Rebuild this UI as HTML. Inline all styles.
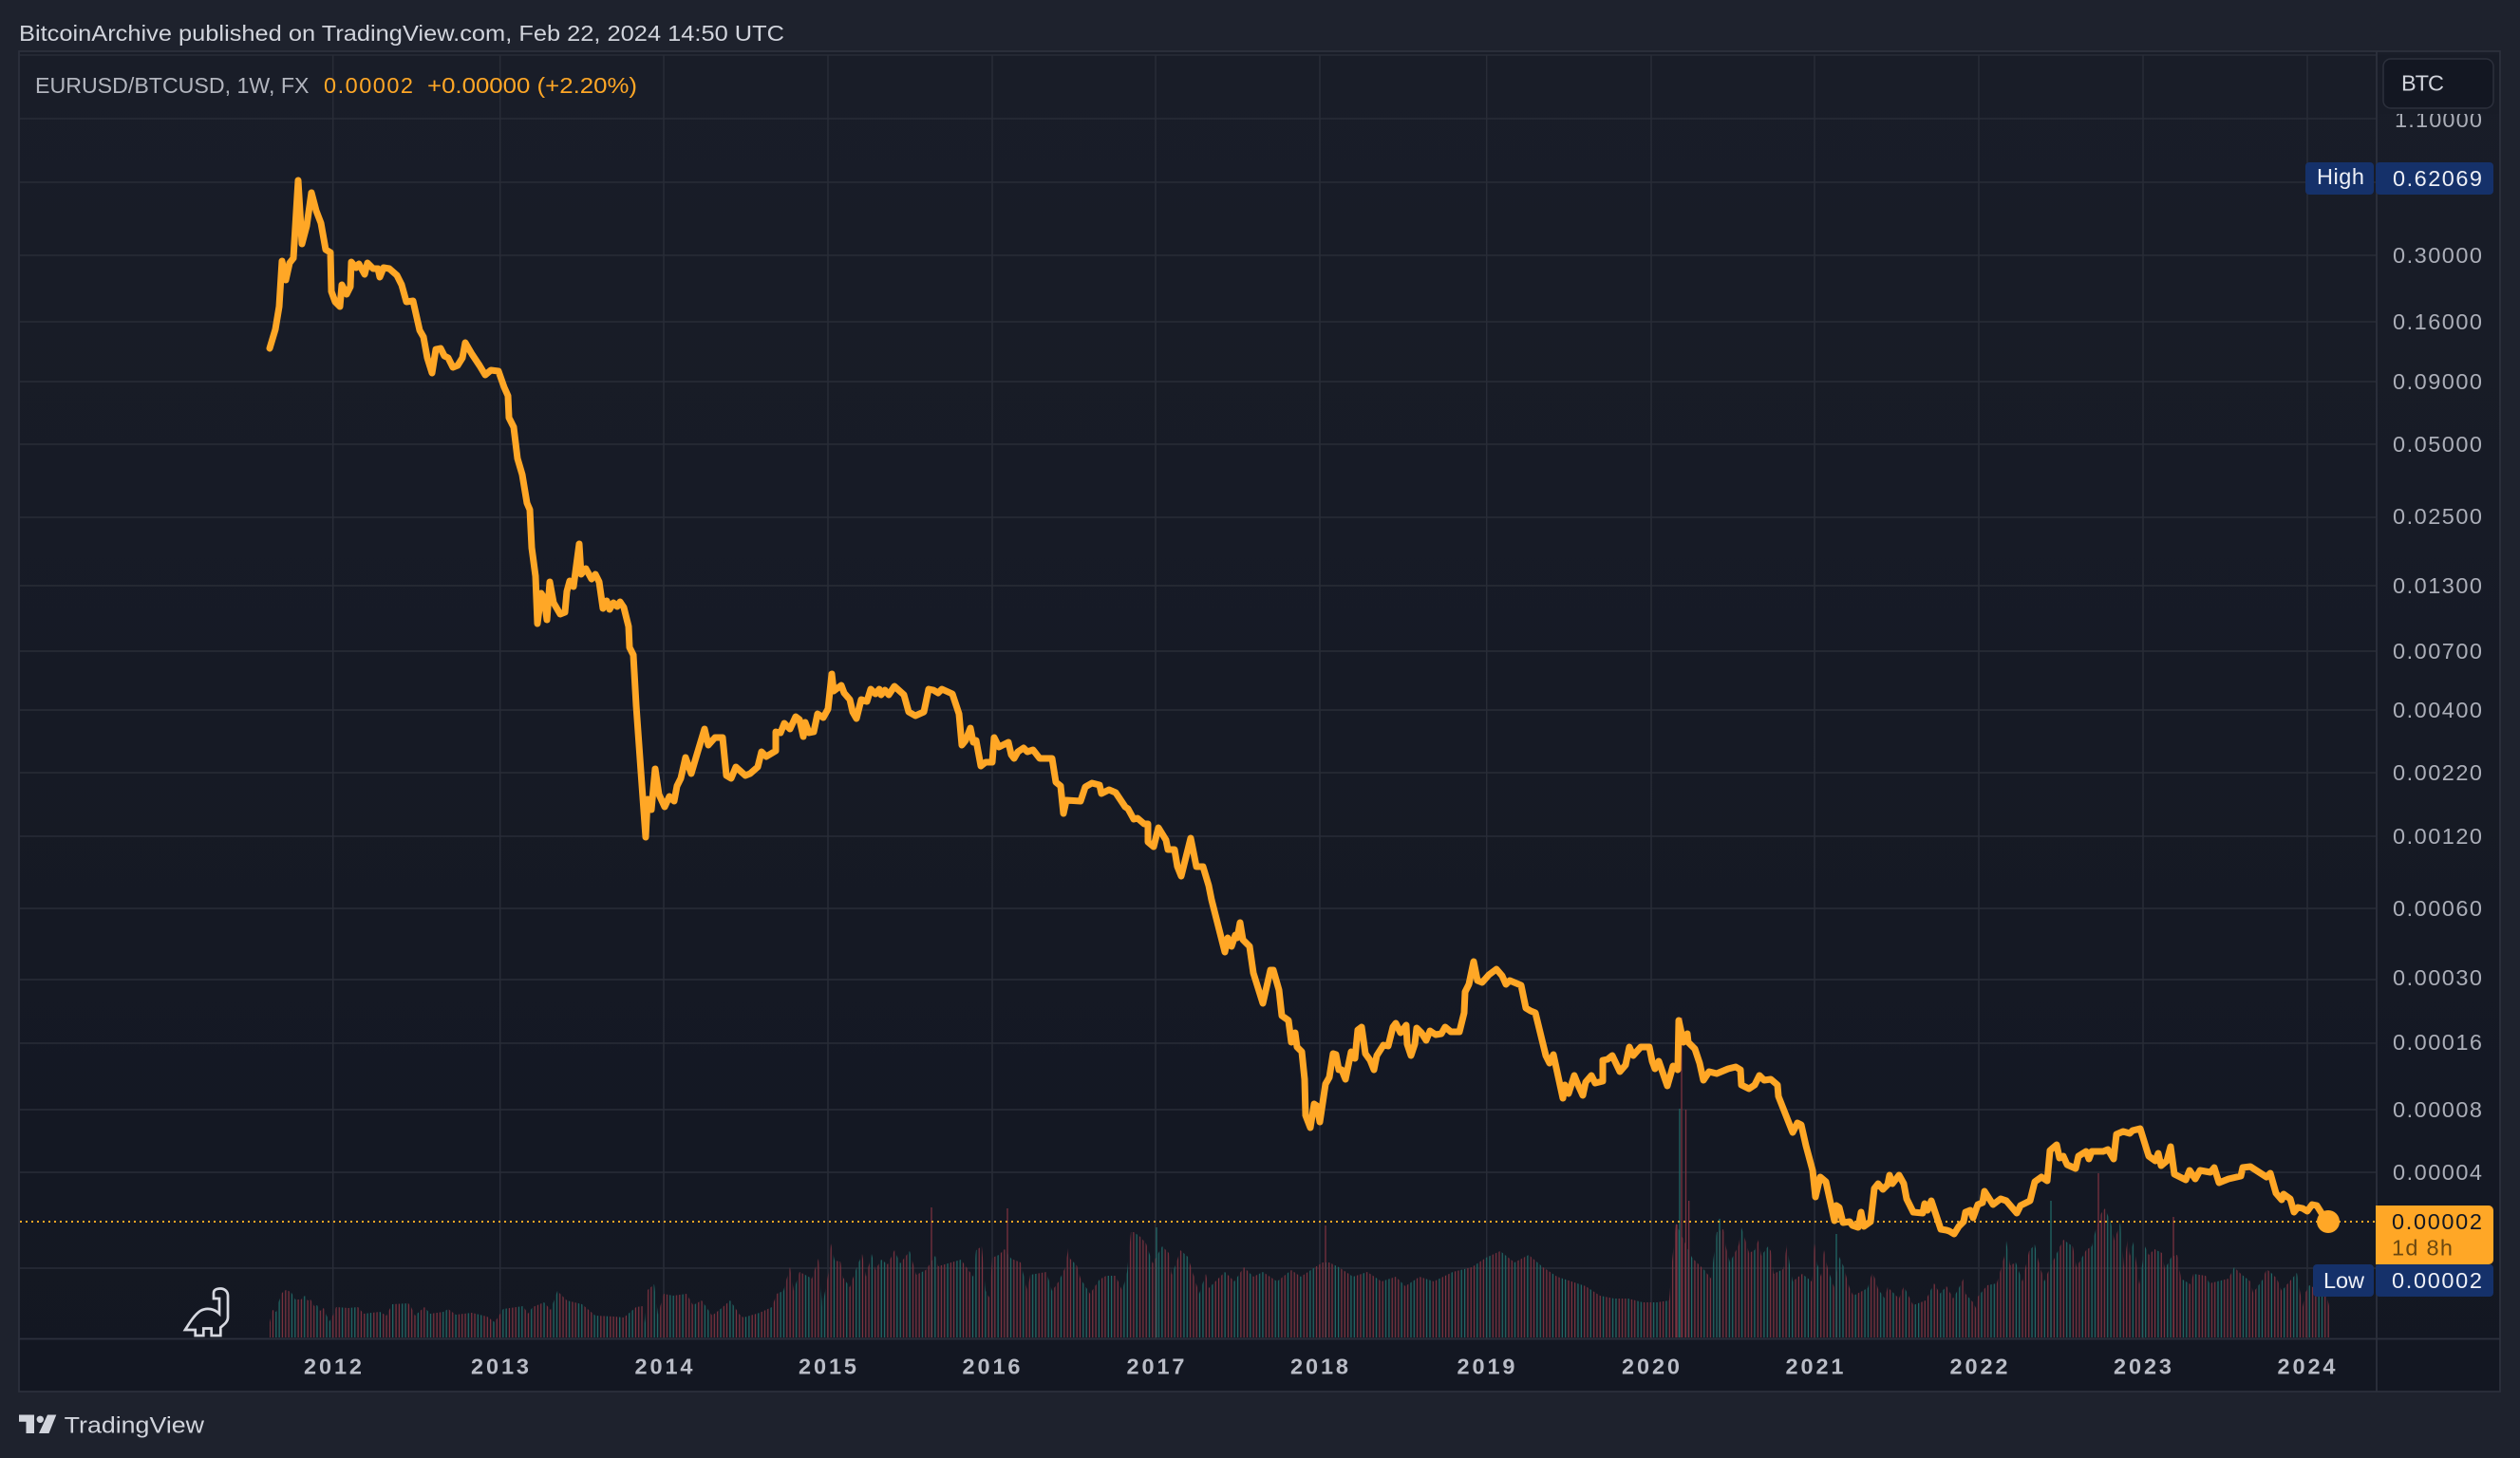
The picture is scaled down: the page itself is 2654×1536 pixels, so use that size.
<!DOCTYPE html>
<html><head><meta charset="utf-8"><title>EURUSD/BTCUSD</title>
<style>
html,body{margin:0;padding:0;background:#1e222d;width:2654px;height:1536px;overflow:hidden}
svg{display:block}
text{font-family:"Liberation Sans",sans-serif;font-size:23.5px}
</style></head><body>
<svg width="2654" height="1536" viewBox="0 0 2654 1536" xmlns="http://www.w3.org/2000/svg">
<defs>
<linearGradient id="bg" x1="0" y1="0" x2="0" y2="1"><stop offset="0" stop-color="#191d28"/><stop offset="1" stop-color="#131722"/></linearGradient>
<pattern id="bars" patternUnits="userSpaceOnUse" x="283.5" y="0" width="79.68" height="1536">
<path stroke="#7d3340" stroke-width="1.25" fill="none" d="M.75 0V1536M3.97 0V1536M13.9 0V1536M17.3 0V1536M20.6 0V1536M30.6 0V1536M33.9 0V1536M40.6 0V1536M43.9 0V1536M47.2 0V1536M53.9 0V1536M57.2 0V1536M67.2 0V1536M70.5 0V1536M73.8 0V1536"/>
<path stroke="#226a67" stroke-width="1.25" fill="none" d="M7.3 0V1536M10.6 0V1536M23.9 0V1536M27.3 0V1536M37.2 0V1536M50.5 0V1536M60.5 0V1536M63.9 0V1536M77.1 0V1536"/>
</pattern>
<clipPath id="vol"><polygon points="284,1410 284,1393 287,1380 291,1382 294,1370 297,1362 301,1359 304,1360 307,1362 311,1369 317,1369 321,1365 324,1370 327,1369 331,1376 334,1375 337,1381 341,1378 344,1386 347,1392 351,1385 354,1377 367,1378 377,1377 383,1384 400,1382 407,1386 413,1374 430,1373 433,1377 437,1386 447,1377 453,1384 467,1382 472,1379 480,1385 497,1383 513,1387 521,1393 530,1379 551,1376 556,1384 561,1377 573,1372 580,1380 587,1360 597,1370 613,1374 627,1386 647,1387 657,1388 670,1377 677,1376 679,1394 682,1359 689,1353 693,1385 699,1363 709,1365 723,1363 730,1375 739,1370 750,1386 760,1378 769,1370 779,1385 783,1388 800,1383 813,1377 818,1363 825,1360 832,1335 836,1360 842,1340 848,1343 855,1347 862,1326 866,1377 873,1338 875,1310 879,1328 885,1329 888,1346 895,1356 902,1336 908,1321 912,1345 918,1321 922,1338 928,1327 935,1332 942,1317 948,1331 958,1318 965,1343 975,1338 985,1323 988,1334 1012,1327 1025,1345 1028,1317 1034,1313 1038,1360 1042,1367 1045,1325 1052,1322 1058,1316 1065,1326 1075,1330 1082,1360 1085,1343 1102,1340 1108,1360 1115,1350 1122,1335 1125,1315 1127,1326 1134,1333 1138,1347 1148,1363 1158,1348 1165,1344 1175,1344 1182,1360 1187,1340 1191,1298 1194,1298 1201,1303 1207,1310 1214,1331 1224,1313 1231,1320 1234,1343 1240,1327 1243,1317 1251,1324 1257,1343 1263,1363 1270,1342 1273,1357 1280,1350 1290,1340 1300,1350 1310,1335 1320,1345 1330,1340 1345,1350 1360,1338 1370,1345 1385,1335 1393,1330 1400,1330 1410,1335 1425,1345 1440,1340 1455,1350 1470,1345 1480,1355 1495,1345 1510,1350 1530,1340 1550,1335 1565,1325 1580,1318 1595,1330 1610,1322 1625,1335 1640,1345 1655,1350 1670,1355 1685,1365 1700,1368 1715,1368 1730,1372 1745,1372 1758,1370 1761,1329 1765,1289 1782,1325 1795,1338 1802,1347 1808,1298 1815,1295 1818,1315 1822,1330 1831,1312 1834,1293 1838,1306 1842,1320 1848,1317 1852,1306 1855,1323 1862,1313 1865,1318 1868,1342 1878,1337 1882,1311 1885,1333 1888,1350 1898,1342 1908,1350 1911,1310 1914,1332 1918,1345 1921,1317 1925,1337 1932,1357 1937,1324 1942,1335 1945,1347 1948,1357 1952,1365 1967,1357 1972,1340 1975,1348 1978,1358 1985,1368 1988,1356 2000,1368 2005,1355 2015,1375 2028,1370 2037,1352 2043,1363 2050,1355 2057,1368 2063,1357 2068,1347 2070,1363 2078,1372 2082,1380 2083,1366 2093,1354 2103,1352 2107,1338 2111,1323 2113,1307 2117,1333 2123,1330 2130,1350 2137,1318 2143,1311 2147,1329 2153,1350 2157,1340 2163,1327 2173,1306 2183,1313 2187,1335 2197,1317 2203,1313 2207,1296 2213,1278 2217,1273 2223,1288 2227,1307 2233,1288 2237,1335 2241,1303 2243,1323 2247,1308 2253,1353 2259,1313 2263,1322 2269,1316 2277,1320 2280,1337 2287,1324 2293,1322 2297,1347 2307,1353 2310,1342 2323,1344 2327,1352 2347,1347 2353,1335 2360,1342 2370,1350 2373,1362 2383,1348 2387,1337 2392,1341 2398,1347 2403,1360 2413,1348 2419,1341 2425,1377 2428,1362 2432,1354 2450,1363 2453,1376 2453,1410"/></clipPath>
</defs>

<rect x="0" y="0" width="2654" height="1536" fill="#1e222d"/>
<rect x="20" y="54" width="2613" height="1412" fill="url(#bg)"/>

<!-- grid -->
<path stroke="#282c37" stroke-width="1.5" fill="none" d="M21 58H2503M21 125H2503M21 192H2503M21 269H2503M21 339H2503M21 402H2503M21 468H2503M21 545H2503M21 617H2503M21 686H2503M21 748H2503M21 814H2503M21 881H2503M21 957H2503M21 1032H2503M21 1099H2503M21 1169H2503M21 1235H2503M21 1336H2503"/>
<path stroke="#282c37" stroke-width="1.5" fill="none" d="M350.7 58V1410M526.7 58V1410M699 58V1410M872 58V1410M1045 58V1410M1217 58V1410M1390 58V1410M1565.7 58V1410M1739 58V1410M1911 58V1410M2084 58V1410M2257 58V1410M2430 58V1410"/>

<!-- volume -->
<rect x="283" y="1200" width="2171" height="209" fill="url(#bars)" clip-path="url(#vol)"/>
<path stroke="#7d3340" stroke-width="1.25" fill="none" d="M981 1272V1409M1061 1273V1409M1396 1291V1409M1771 1072V1409M1775.5 1169V1409M1778.7 1265V1409M1766 1290V1409M2210 1236V1409M2289 1282V1409"/>
<path stroke="#226a67" stroke-width="1.25" fill="none" d="M1218 1293V1409M1769 1168V1409M1811 1284V1409M1934 1300V1409M2160 1265V1409"/>

<!-- last price dotted line -->
<line x1="21" y1="1287" x2="2502" y2="1287" stroke="#ffa726" stroke-width="2" stroke-dasharray="2 4"/>

<!-- main line -->
<polyline fill="none" stroke="#ffa726" stroke-width="7" stroke-linejoin="round" stroke-linecap="round" points="284,367 290,347 294,323 297,275 301,295 305,277 309,272 314,190 318,257 323,238 328,203 333,222 338,235 343,263 348,266 349,307 353,318 358,323 360,300 365,310 369,302 370,276 375,282 378,278 384,289 387,277 393,283 398,283 400,292 404,282 410,283 418,290 423,300 428,318 435,317 442,348 446,355 450,377 455,393 459,368 464,367 468,375 472,377 477,387 482,385 487,377 490,361 497,373 505,385 511,395 517,390 525,391 531,408 535,417 536,440 541,450 545,483 550,500 555,530 558,537 560,577 564,607 566,657 570,625 573,630 576,653 579,613 583,635 590,647 595,645 597,623 600,612 604,618 610,573 612,605 617,599 623,610 627,605 631,613 635,641 639,633 642,642 646,635 650,639 653,634 657,640 662,660 663,682 667,690 670,743 675,813 680,882 682,842 686,853 690,810 694,837 700,850 705,839 710,844 713,828 717,820 722,798 728,815 733,798 742,768 746,785 753,777 761,777 765,817 770,820 775,808 785,817 790,815 798,808 802,792 807,797 817,791 817,771 822,772 826,762 832,768 838,755 842,758 846,776 848,761 852,772 857,771 861,752 867,756 872,747 876,710 878,728 886,722 889,730 895,737 898,750 902,757 907,737 913,739 917,726 922,731 926,726 928,732 932,727 936,732 942,723 952,732 957,750 964,754 973,750 978,726 983,727 988,730 992,726 1003,731 1010,752 1013,785 1017,780 1022,767 1025,782 1028,780 1033,807 1038,803 1045,803 1047,777 1052,787 1062,782 1065,795 1068,799 1072,792 1078,788 1082,792 1088,790 1095,799 1108,799 1112,824 1117,828 1120,857 1123,843 1138,844 1143,829 1150,825 1158,827 1160,836 1168,832 1175,835 1185,850 1188,852 1194,863 1198,862 1205,868 1209,868 1209,887 1215,892 1220,872 1228,885 1230,895 1237,895 1240,913 1244,923 1254,883 1260,913 1267,913 1273,933 1276,948 1290,1003 1293,988 1297,997 1301,985 1303,988 1306,972 1309,990 1316,997 1320,1025 1330,1057 1338,1022 1341,1022 1347,1043 1350,1070 1357,1075 1360,1098 1364,1088 1366,1103 1371,1108 1374,1137 1375,1175 1380,1188 1384,1163 1387,1165 1390,1182 1396,1142 1400,1135 1404,1110 1407,1111 1410,1127 1413,1127 1417,1137 1423,1108 1427,1115 1430,1085 1434,1082 1438,1110 1443,1117 1447,1127 1450,1112 1457,1101 1462,1102 1467,1082 1470,1078 1475,1088 1481,1080 1482,1100 1486,1112 1490,1100 1492,1083 1497,1088 1502,1096 1506,1086 1512,1090 1518,1089 1522,1082 1528,1087 1537,1087 1542,1067 1543,1045 1547,1037 1552,1013 1556,1033 1561,1035 1568,1027 1576,1021 1582,1028 1586,1037 1590,1033 1602,1038 1607,1062 1612,1065 1617,1067 1628,1112 1632,1120 1636,1111 1646,1157 1648,1143 1652,1152 1658,1133 1662,1143 1667,1154 1670,1140 1676,1133 1680,1141 1688,1139 1688,1117 1693,1116 1698,1112 1706,1129 1712,1122 1716,1103 1720,1112 1728,1103 1737,1103 1740,1118 1743,1126 1747,1118 1756,1144 1762,1123 1767,1127 1768,1075 1773,1098 1777,1089 1778,1098 1785,1105 1790,1120 1794,1138 1800,1129 1808,1131 1820,1126 1828,1124 1833,1127 1834,1143 1842,1147 1848,1143 1853,1133 1858,1138 1865,1137 1872,1143 1873,1155 1888,1193 1893,1183 1897,1185 1902,1207 1909,1233 1912,1261 1917,1240 1923,1245 1932,1286 1934,1270 1937,1272 1941,1288 1948,1287 1951,1291 1957,1293 1960,1277 1963,1292 1970,1287 1974,1252 1978,1247 1983,1253 1988,1248 1990,1238 1993,1247 2000,1238 2005,1247 2008,1263 2015,1277 2025,1278 2027,1268 2030,1275 2034,1265 2044,1295 2050,1296 2053,1297 2058,1300 2063,1292 2068,1287 2070,1277 2075,1275 2078,1283 2083,1269 2088,1267 2090,1255 2099,1269 2107,1263 2113,1265 2124,1278 2128,1270 2138,1265 2143,1245 2150,1240 2156,1244 2159,1212 2166,1206 2169,1220 2173,1218 2177,1227 2186,1231 2189,1218 2197,1213 2200,1221 2203,1213 2215,1213 2220,1211 2226,1221 2229,1195 2236,1192 2243,1194 2246,1191 2254,1189 2263,1218 2270,1223 2273,1215 2276,1228 2282,1223 2286,1208 2290,1237 2302,1243 2306,1233 2312,1242 2317,1233 2328,1235 2332,1230 2337,1246 2347,1242 2360,1239 2362,1230 2370,1229 2387,1240 2391,1236 2397,1257 2403,1264 2405,1258 2412,1263 2416,1277 2420,1272 2425,1273 2430,1276 2435,1269 2440,1270 2445,1278 2452,1287"/>
<circle cx="2452" cy="1287" r="12" fill="#ffa726"/>

<!-- dino -->
<path fill="none" stroke="#d6d8e0" stroke-width="2.7" stroke-linejoin="miter" d="M195 1401C200 1393 205 1385 211 1381C218 1377 226 1379 231 1384V1368H225V1362C225 1359 228 1357.5 232 1357.5C237 1357.5 240 1361 240 1365V1388C240 1393 235 1396 232.3 1398.5V1407H222.7V1399.5H214.3V1407H205.7V1401Z"/>

<!-- frame and axes -->
<path stroke="#2c303c" stroke-width="1.8" fill="none" d="M20 54H2633V1466H20ZM2503 54V1466M20 1410.5H2633"/>

<!-- price axis -->
<text x="2522" y="134" textLength="92" fill="#abaeb8">1.10000</text>
<rect x="2505" y="58" width="127" height="62" fill="#181c27"/>
<rect x="2510" y="62" width="116" height="52" rx="8" fill="#131722" stroke="#2c303c" stroke-width="1.5"/>
<text x="2529" y="95.7" textLength="45" fill="#d1d4dc">BTC</text>
<g fill="#abaeb8">
<text x="2520" y="277" textLength="94">0.30000</text>
<text x="2520" y="347" textLength="94">0.16000</text>
<text x="2520" y="410" textLength="94">0.09000</text>
<text x="2520" y="476" textLength="94">0.05000</text>
<text x="2520" y="552" textLength="94">0.02500</text>
<text x="2520" y="625" textLength="94">0.01300</text>
<text x="2520" y="694" textLength="94">0.00700</text>
<text x="2520" y="756" textLength="94">0.00400</text>
<text x="2520" y="822" textLength="94">0.00220</text>
<text x="2520" y="889" textLength="94">0.00120</text>
<text x="2520" y="965" textLength="94">0.00060</text>
<text x="2520" y="1038" textLength="94">0.00030</text>
<text x="2520" y="1106" textLength="94">0.00016</text>
<text x="2520" y="1177" textLength="94">0.00008</text>
<text x="2520" y="1243" textLength="94">0.00004</text>
</g>

<!-- High tag -->
<rect x="2428" y="171" width="72" height="34" rx="4" fill="#15316a"/>
<text x="2440" y="194" textLength="50" fill="#eef0f6">High</text>
<rect x="2502" y="171" width="124" height="34" rx="4" fill="#15316a"/>
<text x="2520" y="196" textLength="94" fill="#eef0f6">0.62069</text>

<!-- last price tag -->
<path d="M2502 1270H2621a5 5 0 0 1 5 5V1327a5 5 0 0 1 -5 5H2502Z" fill="#ffa726"/>
<text x="2519" y="1295" textLength="95" fill="#131722">0.00002</text>
<text x="2519" y="1322.7" textLength="64" fill="#6b4810">1d 8h</text>

<!-- Low tag -->
<rect x="2436" y="1332" width="64" height="34" rx="4" fill="#15316a"/>
<text x="2447" y="1357" textLength="43" fill="#eef0f6">Low</text>
<rect x="2502" y="1332" width="124" height="34" rx="4" fill="#15316a"/>
<text x="2519" y="1357" textLength="95" fill="#eef0f6">0.00002</text>

<!-- time axis -->
<g fill="#b9bcc6">
<text x="320" y="1447.7" textLength="61" font-weight="700">2012</text>
<text x="496" y="1447.7" textLength="61" font-weight="700">2013</text>
<text x="668.5" y="1447.7" textLength="61" font-weight="700">2014</text>
<text x="841" y="1447.7" textLength="61" font-weight="700">2015</text>
<text x="1013.5" y="1447.7" textLength="61" font-weight="700">2016</text>
<text x="1186.5" y="1447.7" textLength="61" font-weight="700">2017</text>
<text x="1359" y="1447.7" textLength="61" font-weight="700">2018</text>
<text x="1534.5" y="1447.7" textLength="61" font-weight="700">2019</text>
<text x="1708" y="1447.7" textLength="61" font-weight="700">2020</text>
<text x="1880.5" y="1447.7" textLength="61" font-weight="700">2021</text>
<text x="2053.5" y="1447.7" textLength="61" font-weight="700">2022</text>
<text x="2226" y="1447.7" textLength="61" font-weight="700">2023</text>
<text x="2398.5" y="1447.7" textLength="61" font-weight="700">2024</text>
</g>

<!-- header -->
<text x="20" y="43" textLength="806" lengthAdjust="spacingAndGlyphs" fill="#d1d4dc">BitcoinArchive published on TradingView.com, Feb 22, 2024 14:50 UTC</text>
<text x="37" y="98" textLength="288.5" lengthAdjust="spacingAndGlyphs" fill="#b2b5be">EURUSD/BTCUSD, 1W, FX</text>
<text x="341" y="98" textLength="94" fill="#ffa726">0.00002</text>
<text x="450" y="98" textLength="221" lengthAdjust="spacingAndGlyphs" fill="#ffa726">+0.00000 (+2.20%)</text>

<!-- logo -->
<path fill="#d1d4dc" d="M20 1490.5H36V1510H27.5V1497.7H20ZM50 1490.5H59.3L51.5 1510H41Z"/>
<circle cx="42.3" cy="1495.3" r="3.7" fill="#d1d4dc"/>
<text x="67.7" y="1509.3" textLength="147.3" lengthAdjust="spacingAndGlyphs" style="font-size:24.5px" fill="#d1d4dc">TradingView</text>
</svg>
</body></html>
